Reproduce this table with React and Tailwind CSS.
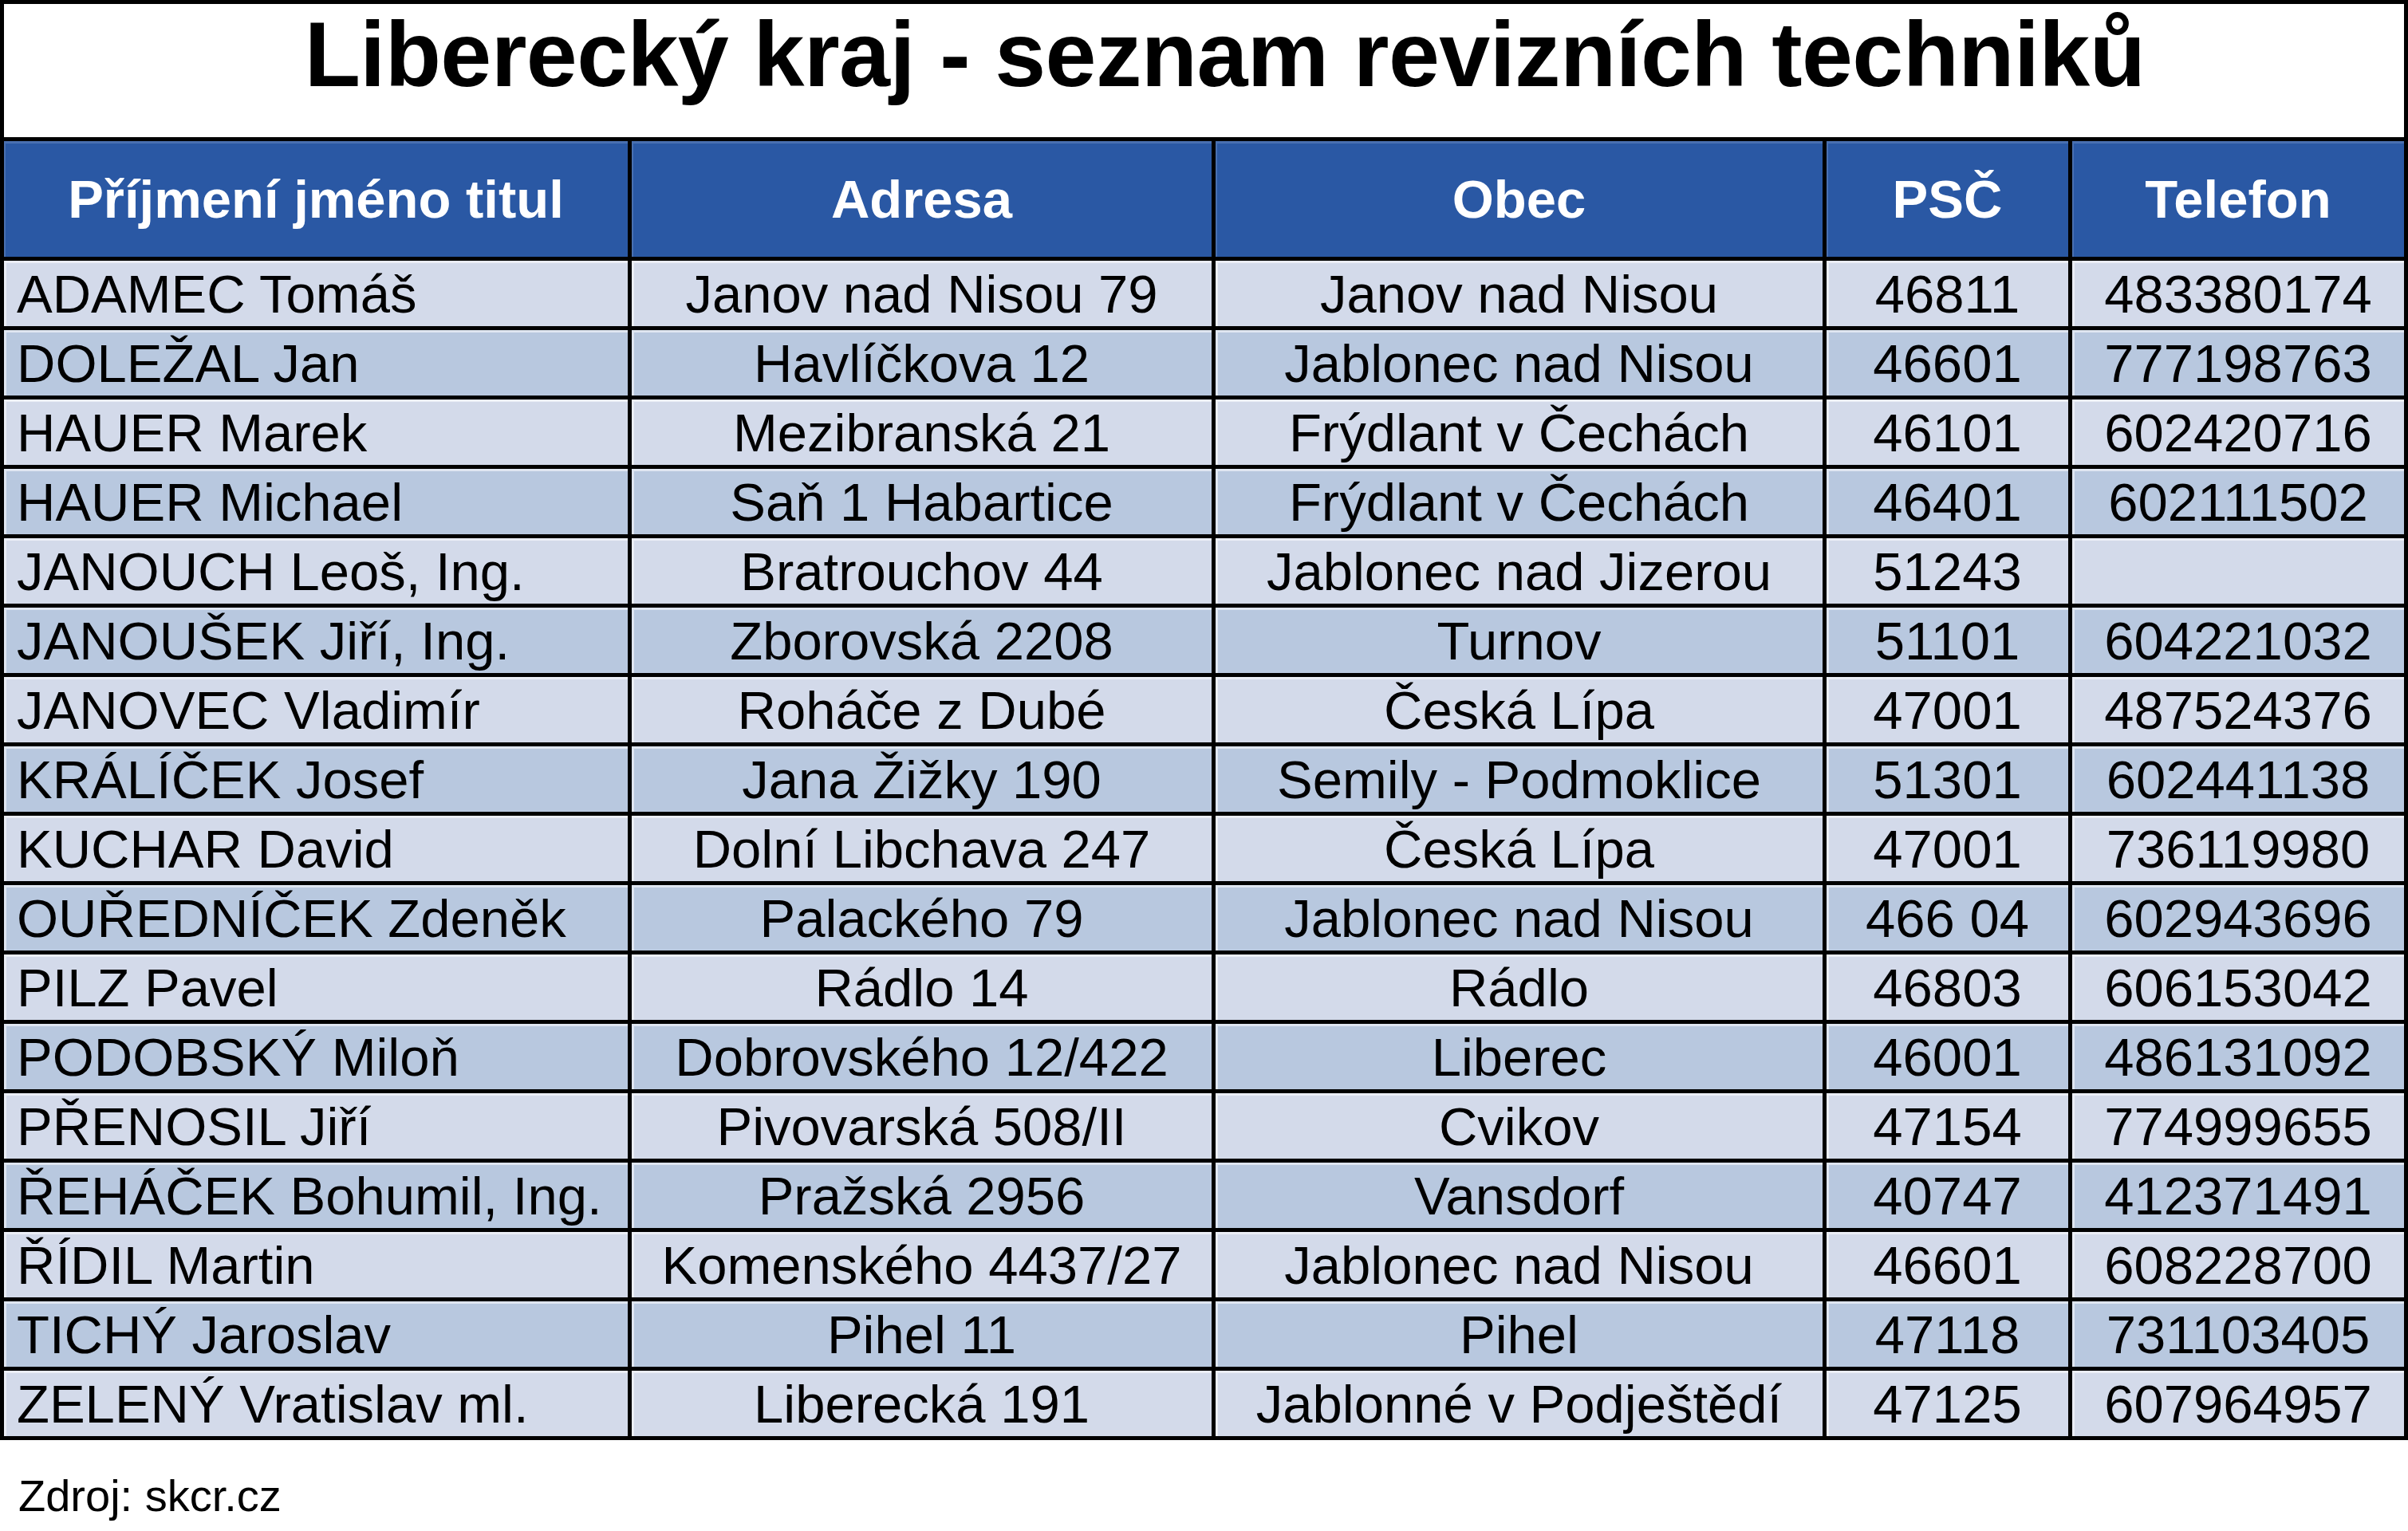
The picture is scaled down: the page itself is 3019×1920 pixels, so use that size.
import React from "react";

const rows = [
  ["ADAMEC Tomáš", "Janov nad Nisou 79", "Janov nad Nisou", "46811", "483380174"],
  ["DOLEŽAL Jan", "Havlíčkova 12", "Jablonec nad Nisou", "46601", "777198763"],
  ["HAUER Marek", "Mezibranská 21", "Frýdlant v Čechách", "46101", "602420716"],
  ["HAUER Michael", "Saň 1 Habartice", "Frýdlant v Čechách", "46401", "602111502"],
  ["JANOUCH Leoš, Ing.", "Bratrouchov 44", "Jablonec nad Jizerou", "51243", ""],
  ["JANOUŠEK Jiří, Ing.", "Zborovská 2208", "Turnov", "51101", "604221032"],
  ["JANOVEC Vladimír", "Roháče z Dubé", "Česká Lípa", "47001", "487524376"],
  ["KRÁLÍČEK Josef", "Jana Žižky 190", "Semily - Podmoklice", "51301", "602441138"],
  ["KUCHAR David", "Dolní Libchava 247", "Česká Lípa", "47001", "736119980"],
  ["OUŘEDNÍČEK Zdeněk", "Palackého 79", "Jablonec nad Nisou", "466 04", "602943696"],
  ["PILZ Pavel", "Rádlo 14", "Rádlo", "46803", "606153042"],
  ["PODOBSKÝ Miloň", "Dobrovského 12/422", "Liberec", "46001", "486131092"],
  ["PŘENOSIL Jiří", "Pivovarská 508/II", "Cvikov", "47154", "774999655"],
  ["ŘEHÁČEK Bohumil, Ing.", "Pražská 2956", "Vansdorf", "40747", "412371491"],
  ["ŘÍDIL Martin", "Komenského 4437/27", "Jablonec nad Nisou", "46601", "608228700"],
  ["TICHÝ Jaroslav", "Pihel 11", "Pihel", "47118", "731103405"],
  ["ZELENÝ Vratislav ml.", "Liberecká 191", "Jablonné v Podještědí", "47125", "607964957"],
];

const headers = ["Příjmení jméno titul", "Adresa", "Obec", "PSČ", "Telefon"];

export default function App() {
  return (
    <div
      className="w-[3019px] min-h-[1920px] bg-white"
      style={{ fontFamily: '"Liberation Sans", Arial, sans-serif' }}
    >
      <div className="grid grid-cols-[782px_727px_761px_303px_416px] gap-[5px] bg-black p-[5px]">
        <div className="col-span-5 h-[167px] bg-white flex justify-center items-start pt-[6px] pl-[52px]">
          <h1 className="text-[115px] leading-none font-bold text-black tracking-[-0.6px]">
            Liberecký kraj - seznam revizních techniků
          </h1>
        </div>
        {headers.map((h) => (
          <div
            key={h}
            className="h-[145px] bg-[#2a58a4] flex items-center justify-center text-white font-bold text-[67px] leading-none shadow-[inset_2px_3px_0_rgba(255,255,255,0.15)]"
          >
            {h}
          </div>
        ))}
        {rows.map((r, i) =>
          r.map((c, j) => (
            <div
              key={i + "-" + j}
              className={
                "h-[82px] flex items-center text-[67px] leading-none text-black whitespace-nowrap shadow-[inset_3px_3px_0_rgba(255,255,255,0.55)] " +
                (i % 2 === 0 ? "bg-[#d3daea] " : "bg-[#b8c8df] ") +
                (j === 0 ? "justify-start pl-[16px]" : "justify-center")
              }
            >
              {c}
            </div>
          ))
        )}
      </div>
      <div className="pl-[23px] pt-[28px] text-[56px] text-black">Zdroj: skcr.cz</div>
    </div>
  );
}
